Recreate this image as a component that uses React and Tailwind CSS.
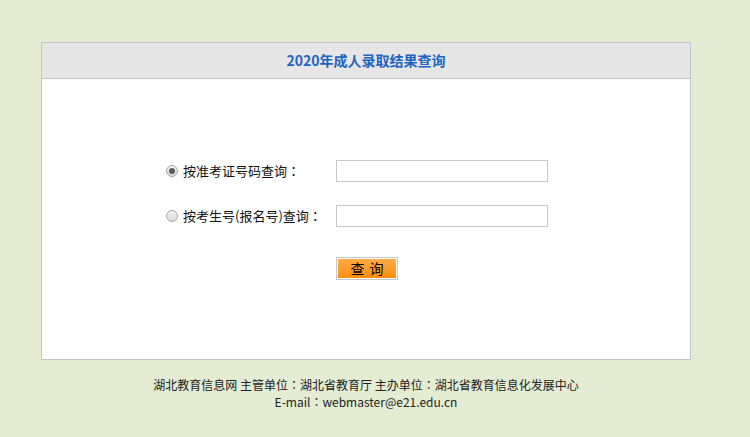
import React, { useState } from "react";

const font = { fontFamily: '"Microsoft YaHei", "Noto Sans CJK SC", sans-serif' };

// centred full-width colon, as the original page renders it
const Colon = () => <span style={{ fontFamily: '"Noto Sans CJK TC", sans-serif' }}>：</span>;

const Radio = ({ checked, onClick }) => (
  <span
    onClick={onClick}
    className="w-[12px] h-[12px] rounded-full border border-[#a8a8a8] bg-gradient-to-b from-[#f4f4f4] to-[#d8d8d8] flex items-center justify-center shrink-0"
  >
    {checked && <span className="w-[6px] h-[6px] rounded-full bg-[#5a5a5a]" />}
  </span>
);

export default function App() {
  const [mode, setMode] = useState("zkz");

  return (
    <div className="min-h-[437px] bg-[#e4edd3] pt-[42px]" style={font}>
      <div className="w-[650px] ml-[41px] border border-[#c4c4c4] bg-white">
        {/* header */}
        <div className="h-[36px] bg-[#e6e6e6] border-b border-[#c4c4c4] flex items-center justify-center">
          <span className="text-[14px] font-bold text-[#2164c0]">2020年成人录取结果查询</span>
        </div>

        {/* form */}
        <div className="h-[280px] pt-[81px] text-[13px] text-[#111]">
          <div className="flex items-center h-[22px]">
            <label className="w-[294px] pl-[124px] flex items-center gap-[5px]">
              <Radio checked={mode === "zkz"} onClick={() => setMode("zkz")} />
              <span>按准考证号码查询<Colon /></span>
            </label>
            <input className="w-[212px] h-[22px] border border-[#c8c8c8] outline-none px-1" />
          </div>
          <div className="flex items-center h-[22px] mt-[23px]">
            <label className="w-[294px] pl-[124px] flex items-center gap-[5px]">
              <Radio checked={mode === "ksh"} onClick={() => setMode("ksh")} />
              <span>按考生号(报名号)查询<Colon /></span>
            </label>
            <input className="w-[212px] h-[22px] border border-[#c8c8c8] outline-none px-1" />
          </div>
          <div className="mt-[30px] pl-[294px]">
            <button className="w-[62px] h-[23px] border border-[#c8c8c8] p-[1px] bg-white">
              <span className="block w-full h-full bg-gradient-to-b from-[#ffab45] to-[#ff8c00] text-[14px] text-black leading-[19px] tracking-[5px] pl-[5px]">
                查询
              </span>
            </button>
          </div>
        </div>
      </div>

      {/* footer */}
      <div className="w-[650px] ml-[41px] mt-[16px] text-center text-[12px] leading-[17px] text-[#222]">
        <p>湖北教育信息网 主管单位<Colon />湖北省教育厅 主办单位<Colon />湖北省教育信息化发展中心</p>
        <p>E-mail<Colon />webmaster@e21.edu.cn</p>
      </div>
    </div>
  );
}
